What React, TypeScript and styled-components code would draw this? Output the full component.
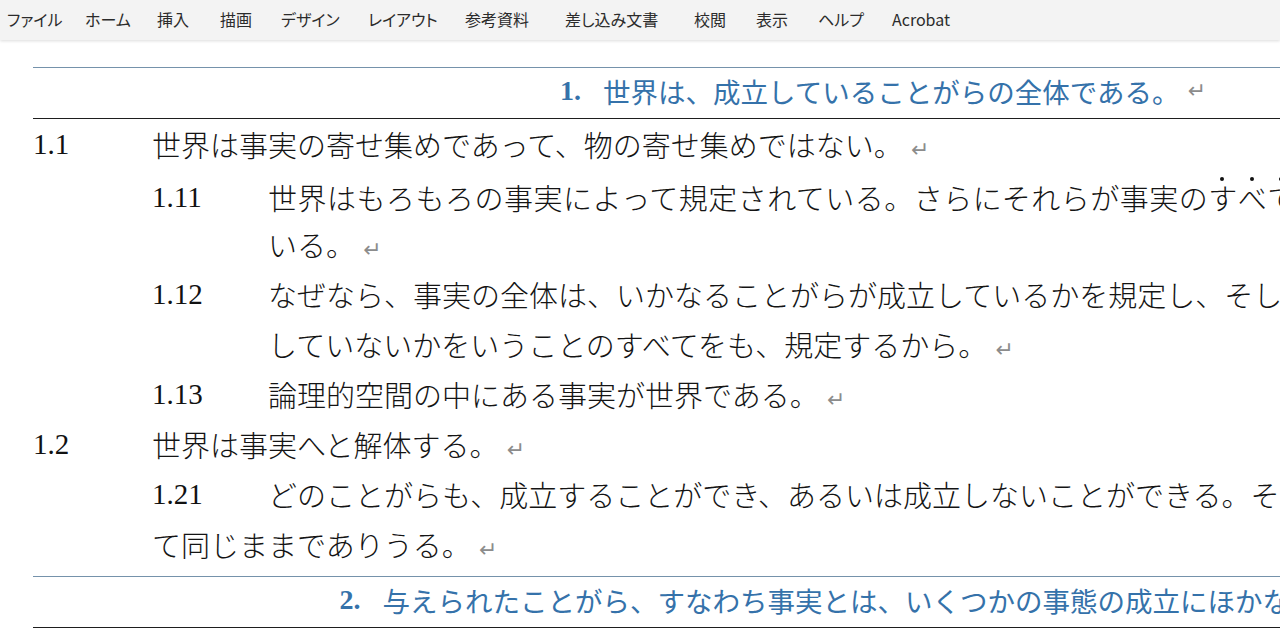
import React from 'react';
import styled, { createGlobalStyle } from 'styled-components';

const GlobalStyle = createGlobalStyle`
  html, body {
    margin: 0;
    padding: 0;
    background: #fff;
    overflow: hidden;
  }
  #root {
    width: 1280px;
    height: 639px;
    overflow: hidden;
  }
`;

const Frame = styled.div`
  width: 1280px;
  height: 639px;
  overflow: hidden;
  background: #fff;
`;

const MenuBar = styled.nav`
  display: flex;
  align-items: center;
  height: 40px;
  padding-left: 7px;
  background: #f3f3f3;
  box-shadow: 0 1px 3px rgba(0, 0, 0, 0.14);
  position: relative;
  z-index: 1;
`;

const MenuItem = styled.span<{ $w?: number }>`
  flex: 0 0 ${p => (p.$w ? `${p.$w}px` : 'auto')};
  font-family: 'Noto Sans CJK JP', sans-serif;
  font-feature-settings: 'palt';
  font-size: 16px;
  color: #2b2b2b;
  line-height: 40px;
  margin-top: -2px;
  white-space: nowrap;
`;

const Page = styled.main`
  width: 1700px;
  margin-left: 33px;
  padding-top: 27px;
  font-family: 'Liberation Serif', 'Noto Sans CJK JP', serif;
  color: #141414;
`;

const Heading = styled.h1<{ $gap?: number }>`
  display: flex;
  align-items: center;
  justify-content: center;
  box-sizing: border-box;
  height: 52px;
  margin: ${p => p.$gap ?? 0}px 0 0;
  padding-bottom: 5px;
  border-top: 1px solid #7592ab;
  border-bottom: 1.5px solid #1e1e1e;
  font-family: 'Noto Sans CJK JP', serif;
  font-weight: 400;
  font-size: 27.5px;
  color: #3572aa;
  white-space: nowrap;
`;

const HeadNum = styled.span`
  font-family: 'Liberation Serif', serif;
  font-weight: 700;
  font-size: 28px;
  margin-right: 22px;
`;

/* one printed line of the document */
const Line = styled.div<{ $indent?: number; $top?: number }>`
  height: 50px;
  line-height: 50px;
  margin-top: ${p => p.$top ?? 0}px;
  padding-left: ${p => p.$indent ?? 0}px;
  white-space: nowrap;
`;

const Num = styled.span<{ $w: number }>`
  display: inline-block;
  width: ${p => p.$w}px;
  font-family: 'Liberation Serif', serif;
  font-size: 29px;
  color: #111;
  vertical-align: top;
`;

const Text = styled.span<{ $spread?: number }>`
  font-family: 'Noto Sans CJK JP', serif;
  font-weight: 300;
  font-size: 29px;
  letter-spacing: ${p => p.$spread ?? 0}px;
  vertical-align: top;
`;

// 傍点: small dot sitting over the character
const Emph = styled.span`
  position: relative;
  &::before {
    content: '';
    position: absolute;
    top: 1px;
    left: 50%;
    width: 4px;
    height: 4px;
    margin-left: -3px;
    border-radius: 50%;
    background: #111;
  }
`;

const Mark = styled.span`
  font-family: 'DejaVu Sans', sans-serif;
  font-size: 22px;
  font-weight: 400;
  letter-spacing: 0;
  color: #8c8c8c;
  margin-left: 8px;
`;

const menus: [string, number?][] = [
  ['ファイル', 78],
  ['ホーム', 72],
  ['挿入', 63],
  ['描画', 61],
  ['デザイン', 87],
  ['レイアウト', 97],
  ['参考資料', 100],
  ['差し込み文書', 129],
  ['校閲', 62],
  ['表示', 62],
  ['ヘルプ', 74],
  ['Acrobat'],
];

const Ret = () => <Mark>↵</Mark>;

export default function App() {
  return (
    <Frame>
      <GlobalStyle />
      <MenuBar>
        {menus.map(([label, w]) => (
          <MenuItem key={label} $w={w}>{label}</MenuItem>
        ))}
      </MenuBar>

      <Page>
        <Heading>
          <HeadNum>1.</HeadNum>世界は、成立していることがらの全体である。<Ret />
        </Heading>

        <Line>
          <Num $w={119}>1.1</Num>
          <Text>世界は事実の寄せ集めであって、物の寄せ集めではない。<Ret /></Text>
        </Line>

        <Line $indent={119} $top={3}>
          <Num $w={116}>1.11</Num>
          <Text $spread={0.5}>
            世界はもろもろの事実によって規定されている。さらにそれらが事実の
            <Emph>す</Emph><Emph>べ</Emph><Emph>て</Emph>であることによって
          </Text>
        </Line>
        <Line $indent={235} $top={-3}>
          <Text>いる。<Ret /></Text>
        </Line>

        <Line $indent={119}>
          <Num $w={116}>1.12</Num>
          <Text>なぜなら、事実の全体は、いかなることがらが成立しているかを規定し、そしてまた</Text>
        </Line>
        <Line $indent={235}>
          <Text>していないかをいうことのすべてをも、規定するから。<Ret /></Text>
        </Line>

        <Line $indent={119}>
          <Num $w={116}>1.13</Num>
          <Text>論理的空間の中にある事実が世界である。<Ret /></Text>
        </Line>

        <Line>
          <Num $w={119}>1.2</Num>
          <Text>世界は事実へと解体する。<Ret /></Text>
        </Line>

        <Line $indent={119}>
          <Num $w={116}>1.21</Num>
          <Text>どのことがらも、成立することができ、あるいは成立しないことができる。その他のすべて</Text>
        </Line>
        <Line $indent={119}>
          <Text>て同じままでありうる。<Ret /></Text>
        </Line>

        <Heading $gap={7}>
          <HeadNum>2.</HeadNum>与えられたことがら、すなわち事実とは、いくつかの事態の成立にほかならない。<Ret />
        </Heading>
      </Page>
    </Frame>
  );
}
